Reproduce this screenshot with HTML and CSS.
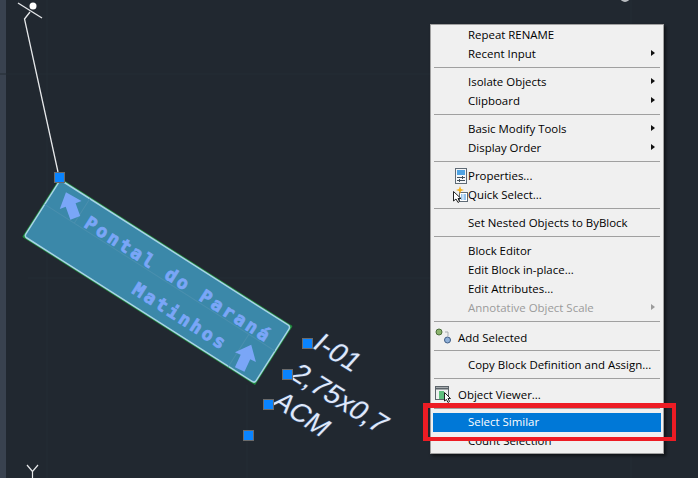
FILE: index.html
```html
<!DOCTYPE html>
<html lang="en">
<head>
<meta charset="utf-8">
<title>Select Similar</title>
<link rel="stylesheet" href="styles.css">
</head>
<body>
<main class="canvas">
  <svg class="drawing" viewBox="0 0 698 478" width="698" height="478">
    <rect class="rail" x="0" y="0" width="6" height="478"/>
    <path class="grid" d="M47 0V478M247 385V478M0 74H430M28 278H430M631 0V24M631 453V478"/>
    <path class="leader" d="M58 172L24.500 19L30 12"/>
    <path class="leader" d="M18 3L42 18"/>
    <circle class="pin" cx="33" cy="6" r="3.500"/>
    <path class="leader axis" d="M27 465L32.500 471.500L38 465M32.500 471.500V478"/>
    <circle class="knob" cx="625" cy="-3" r="5"/>
    <g transform="translate(60 178.500) rotate(32.500)">
      <rect class="sign-edge" x="-0.500" y="-0.500" width="276" height="70" rx="1"/>
      <rect class="sign-face" x="1" y="1" width="273" height="67" rx="3"/>
      <path class="sign-line" d="M1 30H274M36 1V30M243 30V68"/>
      <text class="sign-text" x="45" y="28">Pontal do Paraná</text>
      <text class="sign-text" x="121" y="58">Matinhos</text>
    </g>
    <polygon class="sign-arrow" transform="translate(71 206) rotate(-20) scale(1.050)" points="0,-14 11,-1 5,-1 5,12 -5,12 -5,-1 -11,-1"/>
    <polygon class="sign-arrow" transform="translate(245 358) rotate(25) scale(1.050)" points="0,-14 11,-1 5,-1 5,12 -5,12 -5,-1 -11,-1"/>
    <text class="attr" transform="translate(311 347) rotate(32) skewX(-10)">I-01</text>
    <text class="attr" transform="translate(288 377) rotate(32) skewX(-10)">2,75x0,7</text>
    <text class="attr attr-tight" transform="translate(271 404) rotate(34) skewX(-10)">ACM</text>
    <rect class="grip" x="54.500" y="172.500" width="10" height="10"/>
    <rect class="grip" x="302.500" y="338.500" width="10" height="10"/>
    <rect class="grip" x="282.500" y="369.500" width="10" height="10"/>
    <rect class="grip" x="263.500" y="399.500" width="10" height="10"/>
    <rect class="grip" x="243.500" y="430.500" width="10" height="10"/>
  </svg>

  <nav class="menu">
    <div class="row">Repeat RENAME</div>
    <div class="row sub">Recent Input</div>
    <hr class="sep">
    <div class="row sub">Isolate Objects</div>
    <div class="row sub">Clipboard</div>
    <hr class="sep">
    <div class="row sub">Basic Modify Tools</div>
    <div class="row sub">Display Order</div>
    <hr class="sep">
    <div class="row iconed">
      <svg class="icon" viewBox="0 0 15 17" width="15" height="17">
        <rect x="2.500" y="1.500" width="11" height="15" fill="#f4f6f8" stroke="#5f6b76"/>
        <rect x="4" y="3" width="8" height="5" fill="#4fa3e3"/>
        <path d="M4 10.500H12M4 13.500H12" stroke="#44505a"/>
        <path d="M9.500 9V12M6.500 12V15" stroke="#44505a"/>
      </svg>
      <span>Properties...</span>
    </div>
    <div class="row iconed">
      <svg class="icon" viewBox="0 0 15 17" width="15" height="17">
        <rect x="6.500" y="6.500" width="8" height="9" fill="#fff" stroke="#5f6b76"/>
        <path d="M8 9H9.500M8 11H9.500M8 13H9.500M10.500 9H13M10.500 11H13M10.500 13H13" stroke="#2a86d8"/>
        <path d="M7 0L8 3L11 4L8 5L7 8L6 5L3 4L6 3Z" fill="#f5b21a"/>
        <path d="M0.500 5.500V15L3 13L5 16.500L6.500 15.500L5 12.500H8Z" fill="#fff" stroke="#222"/>
      </svg>
      <span>Quick Select...</span>
    </div>
    <hr class="sep">
    <div class="row">Set Nested Objects to ByBlock</div>
    <hr class="sep">
    <div class="row">Block Editor</div>
    <div class="row">Edit Block in-place...</div>
    <div class="row">Edit Attributes...</div>
    <div class="row sub off">Annotative Object Scale</div>
    <hr class="sep">
    <div class="row wide add">
      <svg class="icon" viewBox="0 0 17 19" width="17" height="19">
        <path d="M10 4H13V8" fill="none" stroke="#a8adb2"/>
        <circle cx="4" cy="4" r="3" fill="#8cb46e" stroke="#4b6d3a"/>
        <circle cx="12.500" cy="12" r="3" fill="#8fb0d8" stroke="#3f5d85"/>
      </svg>
      <span>Add Selected</span>
    </div>
    <hr class="sep">
    <div class="row">Copy Block Definition and Assign...</div>
    <hr class="sep">
    <div class="row wide view">
      <svg class="icon" viewBox="0 0 17 17" width="17" height="17">
        <rect x="0.500" y="0.500" width="13" height="13" fill="#eef0f0" stroke="#5c646a"/>
        <path d="M1 2.500H13" stroke="#5c646a" stroke-width="2"/>
        <path d="M4 5H9V13H4Z" fill="#5fc07e"/>
        <path d="M9.500 6.500V15L11.500 13.500L13 16.500L14.500 15.500L13 12.500H15.500Z" fill="#fff" stroke="#222"/>
      </svg>
      <span>Object Viewer...</span>
    </div>
    <hr class="sep">
    <div class="row active">Select Similar</div>
    <div class="row last">Count Selection</div>
  </nav>

  <div class="callout"></div>
</main>
</body>
</html>
```

FILE: styles.css
```css
html, body {
  margin: 0;
  padding: 0;
}

body {
  width: 698px;
  height: 478px;
  overflow: hidden;
  background: #212830;
}

.canvas {
  position: relative;
  width: 698px;
  height: 478px;
  overflow: hidden;
}

.drawing {
  position: absolute;
  top: 0;
  left: 0;
}

.rail { fill: #39424f; }
.grid { fill: none; stroke: #252c35; stroke-width: 1; }
.leader { fill: none; stroke: #e6e8ea; stroke-width: 1.300; }
.axis { stroke-width: 1.200; }
.pin { fill: #fff; }
.knob { fill: #b9bcc0; }

.sign-edge { fill: #1f8a3c; }
.sign-face { fill: #3b88a9; stroke: #a9d3e6; stroke-width: 1.500; }
.sign-line { fill: none; stroke: #4a8fae; stroke-width: 1; }
.sign-text {
  font-family: "DejaVu Sans Mono", monospace;
  font-size: 18px;
  font-weight: 700;
  letter-spacing: 2.800px;
  fill: #7aa6f7;
  stroke: #7aa6f7;
  stroke-width: 0.800;
}
.sign-arrow { fill: #7aa6f7; }

.attr {
  font-family: "Liberation Sans", sans-serif;
  font-size: 28px;
  fill: #dfe8fa;
  stroke: #2a3b58;
  stroke-width: 1.500;
  paint-order: stroke;
}

.attr-tight { font-size: 27px; }

.grip {
  fill: #0a84ff;
  stroke: #6b6b6b;
  stroke-width: 1;
}

.menu {
  position: absolute;
  top: 24px;
  left: 430px;
  box-sizing: border-box;
  width: 234px;
  height: 430px;
  padding: 0 2px;
  background: #f0f0f0;
  border: 1px solid #a0a0a0;
  box-shadow: 2px 2px 3px rgba(0, 0, 0, 0.55);
  font-family: "Open Sans", sans-serif;
  font-size: 11.450px;
  color: #000;
}

.row {
  position: relative;
  box-sizing: border-box;
  height: 19px;
  padding-left: 35px;
  line-height: 19px;
  white-space: nowrap;
}

.iconed {
  display: flex;
  align-items: center;
  padding-left: 20px;
}

.iconed .icon {
  width: 15px;
  flex: none;
}

.wide {
  display: flex;
  align-items: center;
  gap: 6px;
  height: 20px;
  padding-left: 2px;
}

.add { height: 20px; padding-top: 2px; }
.view { height: 21px; padding-top: 1px; }

.icon { display: block; flex: none; }

.sub::after {
  content: "";
  position: absolute;
  top: 6px;
  right: 6px;
  border-style: solid;
  border-width: 3.500px 0 3.500px 4px;
  border-color: transparent transparent transparent #111;
}

.off { color: #9b9b9b; }
.off::after { border-left-color: #9b9b9b; }

.active {
  line-height: 18px;
  background: #0078d7;
  color: #fff;
}

.last { line-height: 18px; }

.sep {
  height: 1px;
  margin: 4px 1px 4px;
  border: 0;
  background: #a0a0a0;
}

.callout {
  position: absolute;
  top: 403px;
  left: 423px;
  box-sizing: border-box;
  width: 253px;
  height: 38px;
  border-style: solid;
  border-color: #ed1c24;
  border-width: 5px 4px 4px 5px;
}
```
